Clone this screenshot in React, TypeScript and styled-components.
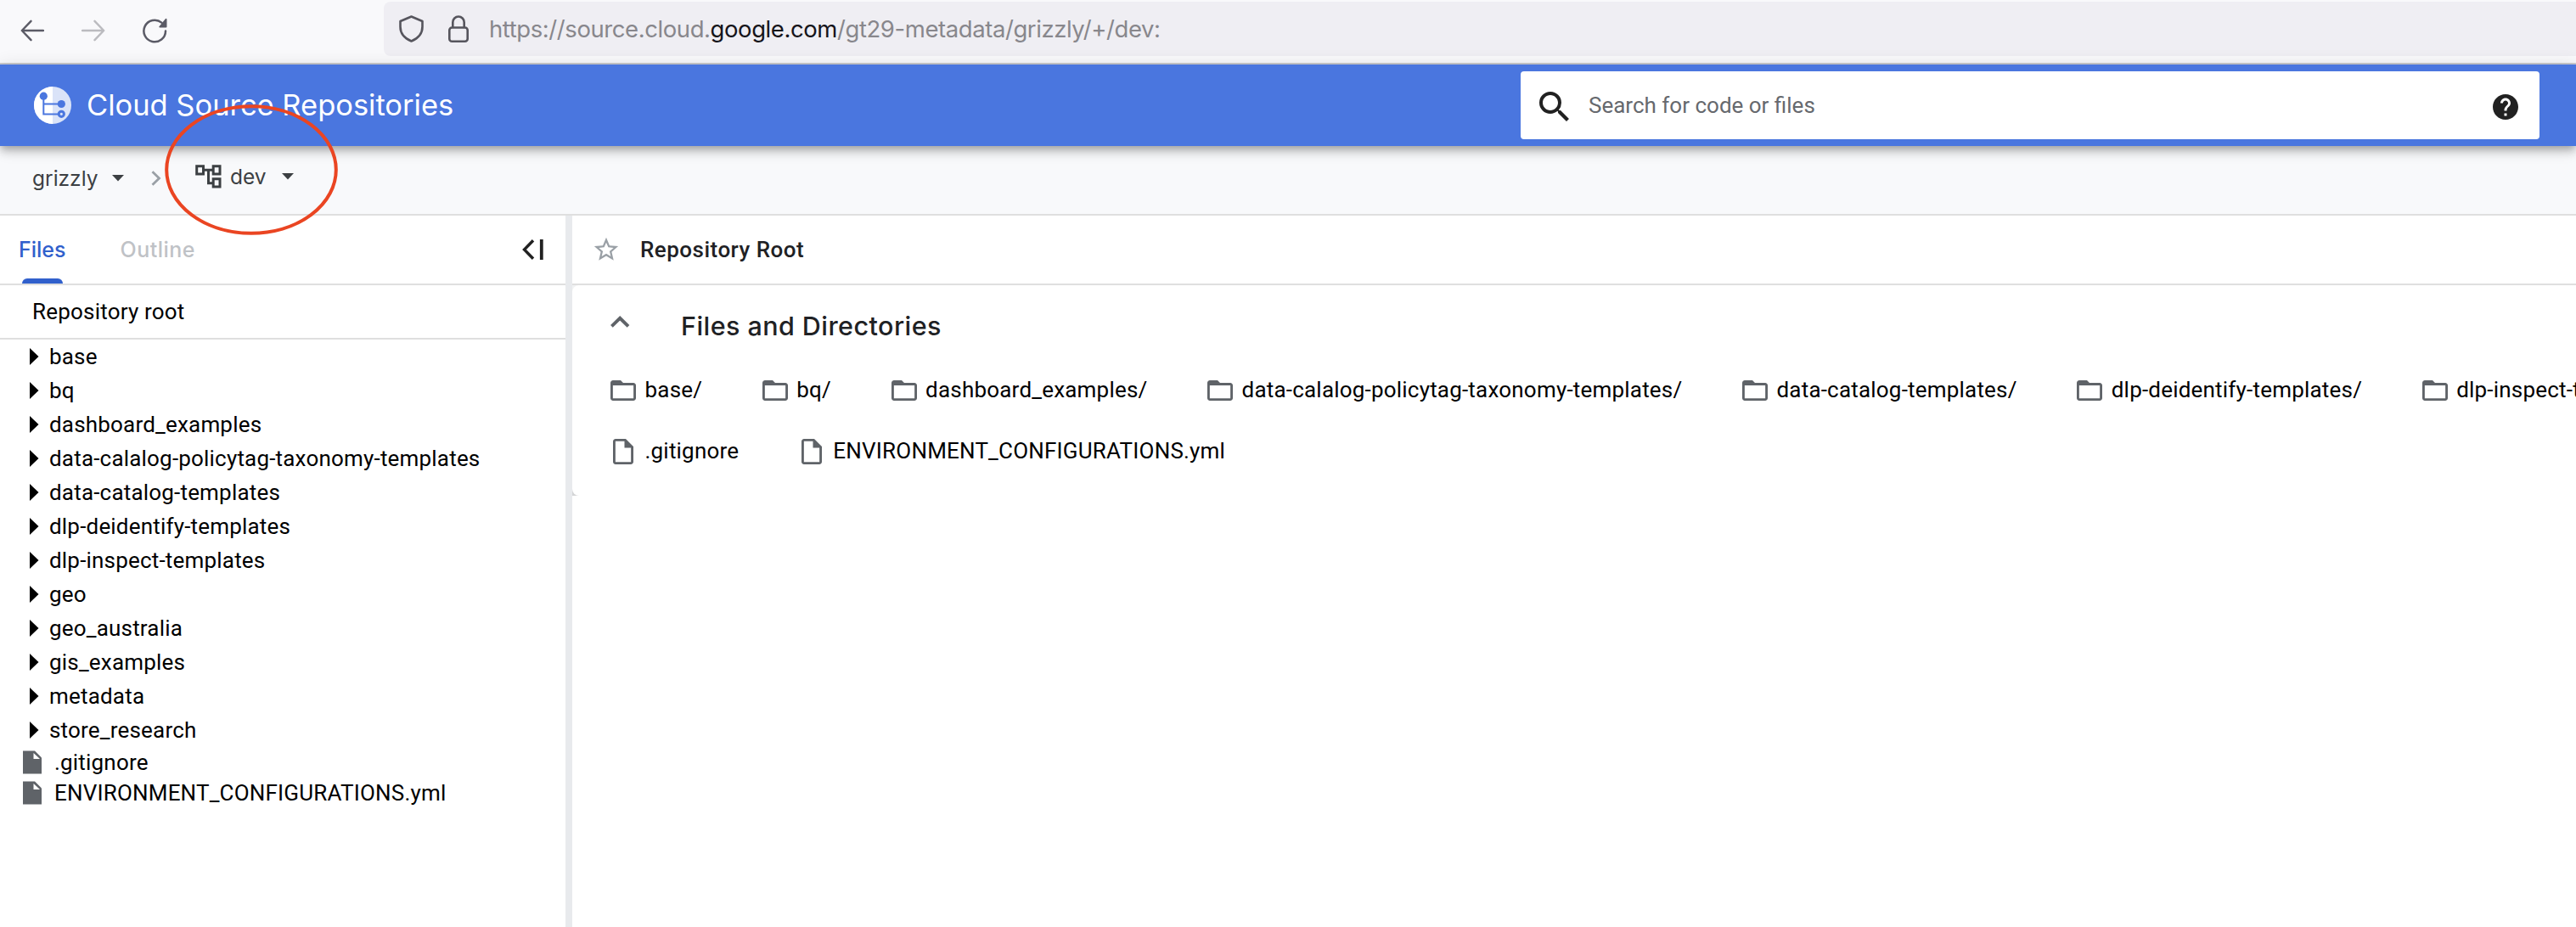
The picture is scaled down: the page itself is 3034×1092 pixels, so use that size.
import React from "react";
import styled, { createGlobalStyle } from "styled-components";

const GlobalStyle = createGlobalStyle`
  *, *::before, *::after { box-sizing: border-box; }
  body { margin: 0; background: #fff; overflow: hidden; }
  svg { display: block; flex: none; }
`;

const roboto = `Roboto, "Liberation Sans", sans-serif`;
const display = `Inter, "Liberation Sans", sans-serif`;

const Page = styled.div`
  position: relative;
  display: flex;
  flex-direction: column;
  height: 1092px;
  overflow: hidden;
  font-family: ${roboto};
  font-size: 26px;
  color: #000;
`;

const BrowserBar = styled.div`
  display: flex;
  flex: none;
  height: 76px;
  padding-top: 2px;
  background: #f9f9fb;
  border-bottom: 2px solid #cbcbce;
`;

const NavButtons = styled.div`
  display: flex;
  align-items: center;
  gap: 44px;
  width: 452px;
  height: 68px;
  padding-left: 24px;
`;

const AddressBar = styled.div`
  display: flex;
  flex: 1;
  align-items: center;
  height: 64px;
  padding-left: 18px;
  border-radius: 8px 0 0 8px;
  background: #efeef3;
`;

const LockSlot = styled.span`
  margin-left: 29px;
`;

const Url = styled.span`
  margin-left: 24px;
  font: 400 27.5px/66px ${display};
  letter-spacing: -0.42px;
  color: #88878c;
  white-space: nowrap;
`;

const Host = styled.span`
  color: #15141a;
`;

const Header = styled.header`
  position: relative;
  z-index: 1;
  display: flex;
  flex: none;
  align-items: center;
  justify-content: space-between;
  height: 96px;
  padding: 0 43px 0 40px;
  background: #4a76df;
  box-shadow: 0 8px 10px rgba(0, 0, 0, 0.14), 0 2px 20px rgba(0, 0, 0, 0.12),
    0 4px 8px -2px rgba(0, 0, 0, 0.2);
`;

const Brand = styled.div`
  display: flex;
  align-items: center;
  gap: 18px;
`;

const BrandName = styled.span`
  font: 400 34.5px/48px ${display};
  letter-spacing: -0.02px;
  color: #fff;
  white-space: nowrap;
`;

const SearchBox = styled.div`
  display: flex;
  align-items: center;
  width: 1200px;
  height: 80px;
  padding: 4px 22px 0 16px;
  border-radius: 4px;
  background: #fff;
`;

const SearchHint = styled.span`
  flex: 1;
  margin: -5px 0 0 16px;
  font-size: 26px;
  line-height: 40px;
  color: #66696e;
`;

const Crumbs = styled.nav`
  display: flex;
  flex: none;
  height: 82px;
  padding: 16px 0 0 38px;
  background: #f8f9fb;
  border-bottom: 2px solid #dfdfdf;
`;

const Crumb = styled.span<{ $width: number; $lift?: number }>`
  display: flex;
  align-items: center;
  justify-content: space-between;
  width: ${(p) => p.$width}px;
  height: 44px;
  margin-top: ${(p) => -(p.$lift ?? 0)}px;
  font: 400 24.5px/44px ${display};
  color: #3c4043;
`;

const CrumbSeparator = styled.span`
  display: flex;
  align-items: center;
  height: 44px;
  margin: 0 40px 0 32px;
`;

const CrumbLabel = styled.span`
  display: flex;
  align-items: center;
  gap: 10px;
`;

const Body = styled.div`
  display: flex;
  flex: 1;
`;

const Sidebar = styled.aside`
  width: 674px;
  flex: none;
  border-right: 8px solid #e8eaed;
`;

const TabRow = styled.div`
  display: flex;
  justify-content: space-between;
  height: 82px;
  padding: 0 26px 0 22px;
  border-bottom: 2px solid #dfdfdf;
`;

const Tabs = styled.div`
  display: flex;
  gap: 64px;
`;

const Tab = styled.div<{ $active?: boolean }>`
  display: flex;
  flex-direction: column;
  align-items: center;
  justify-content: space-between;
  height: 80px;
  font: 500 25px/80px ${display};
  letter-spacing: ${(p) => (p.$active ? 0 : 0.5)}px;
  color: ${(p) => (p.$active ? "#3160cc" : "#bfc2c6")};
  &::after {
    content: "";
    display: ${(p) => (p.$active ? "block" : "none")};
    width: 54px;
    height: 6px;
    margin-top: -6px;
    border-radius: 6px 6px 0 0;
    background: #3160cc;
    width: 48px;
  }
`;

const CollapseButton = styled.span`
  display: flex;
  align-items: center;
  height: 80px;
`;

const SidebarHeading = styled.div`
  height: 64px;
  padding-left: 38px;
  border-bottom: 2px solid #dfdfdf;
  font-size: 26px;
  line-height: 62px;
  letter-spacing: 0.2px;
`;

const TreeFolder = styled.div`
  display: flex;
  align-items: center;
  gap: 12px;
  height: 40px;
  padding-left: 35px;
  line-height: 40px;
  letter-spacing: 0.19px;
  white-space: nowrap;
`;

const TreeFile = styled(TreeFolder)`
  gap: 14px;
  height: 36px;
  padding-left: 27px;
  line-height: 36px;
`;

const Main = styled.main`
  flex: 1;
  min-width: 0;
`;

const TitleRow = styled.div`
  display: flex;
  align-items: center;
  gap: 23px;
  height: 82px;
  padding-left: 23px;
  border-bottom: 2px solid #dfdfdf;
`;

const Title = styled.h1`
  margin: 0;
  font: 500 26px/80px ${roboto};
  letter-spacing: 0.48px;
  color: #202124;
`;

const CardBackdrop = styled.div`
  background: linear-gradient(#f1f2f3 50%, #d4d5d7 50%);
`;

const Card = styled.section`
  height: 248px;
  padding-left: 42px;
  border-radius: 8px 0 0 8px;
  background: #fff;
`;

const CardHeader = styled.div`
  display: flex;
  align-items: center;
  height: 88px;
  padding: 0 0 2px 3px;
`;

const CardTitle = styled.h2`
  margin: 9px 0 0 60px;
  font: 500 30.5px/80px ${display};
  letter-spacing: 0.44px;
  color: #202124;
`;

const EntryRow = styled.div`
  display: flex;
  gap: 67.6px;
  height: 72px;
`;

const Entry = styled.span`
  display: flex;
  flex: none;
  align-items: center;
  gap: 7.5px;
  height: 72px;
  letter-spacing: 0.2px;
  white-space: nowrap;
`;

const EntryName = styled.span`
  padding-bottom: 2px;
`;

const Annotation = styled.svg`
  position: absolute;
  z-index: 2;
  left: 194px;
  top: 123px;
`;

const line = { fill: "none", strokeLinecap: "round", strokeLinejoin: "round" } as const;

const BackIcon = () => (
  <svg width="28" height="26" viewBox="0 0 28 26" stroke="#5b5b66" strokeWidth="2.4" {...line}>
    <path d="M27 13H2M12.500 1.800 1.800 13l10.700 11.200" />
  </svg>
);

const ForwardIcon = () => (
  <svg width="28" height="26" viewBox="0 0 28 26" stroke="#bbbbbf" strokeWidth="2.4" {...line}>
    <path d="M1 13h25M15.500 1.800 26.200 13 15.500 24.200" />
  </svg>
);

const ReloadIcon = () => (
  <svg width="29" height="30" viewBox="0 0 29 30">
    <path d="M27 15.500A12.800 12.800 0 1 1 22.300 5.600" stroke="#5b5b66" strokeWidth="2.5" {...line} />
    <path d="M28.500 1.800v8.700a1 1 0 0 1-1 1h-7.300a.8.800 0 0 1-.6-1.400l7.400-9a.9.900 0 0 1 1.500.7z" fill="#5b5b66" />
  </svg>
);

const ShieldIcon = () => (
  <svg width="29" height="32" viewBox="0 0 29 32" stroke="#56555d" strokeWidth="2.6" {...line}>
    <path d="M14.500 1.500 27.500 7v6.500c0 7-4.500 13.500-13 17-8.500-3.500-13-10-13-17V7z" />
  </svg>
);

const LockIcon = () => (
  <svg width="24" height="32" viewBox="0 0 24 32" stroke="#56555d" strokeWidth="2.6" {...line}>
    <rect x="1.300" y="14.500" width="21.400" height="16.200" rx="3" />
    <path d="M5.300 14V8.200a6.700 6.700 0 0 1 13.400 0V14" />
  </svg>
);

const Logo = () => (
  <svg width="44" height="44" viewBox="0 0 44 44">
    <circle cx="22" cy="22" r="22" fill="#dae3f8" />
    <path d="M22 0a22 22 0 0 0 0 44z" fill="#fff" />
    <g fill="none" stroke="#4a76df" strokeWidth="2">
      <path d="M11.300 11v21.500h18M11.300 20.500h21" />
      <circle cx="32.300" cy="32.300" r="3.100" strokeWidth="3" />
    </g>
    <circle cx="11.300" cy="11.200" r="4.600" fill="#4a76df" />
    <circle cx="32.300" cy="20.500" r="4.600" fill="#4a76df" />
  </svg>
);

const SearchIcon = () => (
  <svg width="48" height="48" viewBox="0 0 24 24" fill="#212121">
    <path d="M15.500 14h-.79l-.28-.27A6.471 6.471 0 0 0 16 9.500 6.500 6.500 0 1 0 9.500 16c1.610 0 3.090-.59 4.230-1.570l.27.28v.79l5 4.990L20.490 19l-4.990-5zm-6 0C7.010 14 5 11.990 5 9.500S7.010 5 9.500 5 14 7.010 14 9.500 11.990 14 9.500 14z" />
  </svg>
);

const HelpIcon = () => (
  <svg width="36" height="36" viewBox="0 0 24 24" fill="#212121">
    <path d="M12 2C6.480 2 2 6.480 2 12s4.480 10 10 10 10-4.480 10-10S17.520 2 12 2zm1 17h-2v-2h2v2zm2.070-7.750l-.9.920C13.450 12.900 13 13.500 13 15h-2v-.5c0-1.100.45-2.100 1.170-2.830l1.240-1.260c.37-.36.590-.86.590-1.410 0-1.100-.9-2-2-2s-2 .9-2 2H8c0-2.210 1.790-4 4-4s4 1.790 4 4c0 .88-.36 1.680-.93 2.250z" />
  </svg>
);

const CaretIcon = () => (
  <svg width="14" height="8" viewBox="0 0 14 8" fill="#3c4043">
    <path d="M0 0h14L7 7.600z" />
  </svg>
);

const ChevronRightIcon = () => (
  <svg width="12" height="18" viewBox="0 0 12 18" fill="none" stroke="#9aa0a6" strokeWidth="2.800">
    <path d="M1.500 1.200 9.500 9l-8 7.800" />
  </svg>
);

const TreeIcon = () => (
  <svg width="31" height="28" viewBox="0 0 31 28" fill="none" stroke="#3c4043" strokeWidth="3">
    <path d="M1.700 1.700H9.500V11H1.700zM21.200 1.700h7.800V11H21.200zM21.200 16.700h7.800v9.300H21.200zM9.500 6.300h11.700M15.500 6.300v15.400H21" />
  </svg>
);

const CollapseIcon = () => (
  <svg width="25" height="24" viewBox="0 0 25 24" fill="none" stroke="#212121">
    <path d="M13 1.200 2.500 12 13 22.800" strokeWidth="3.400" />
    <path d="M22.800 0v24" strokeWidth="3.800" />
  </svg>
);

const TriangleIcon = () => (
  <svg width="11" height="20" viewBox="0 0 11 20">
    <path d="M0 0 10.500 10 0 20z" />
  </svg>
);

const SolidFileIcon = () => (
  <svg width="23" height="28" viewBox="0 0 23 28">
    <path d="M0 .5h14l8 8V27.500H0z" fill="#5f6368" />
    <path d="M12.500 3v7H20z" fill="#fff" />
  </svg>
);

const StarIcon = () => (
  <svg width="34" height="34" viewBox="0 0 24 24" fill="#9aa0a6">
    <path d="M22 9.240l-7.190-.62L12 2 9.190 8.630 2 9.240l5.460 4.730L5.820 21 12 17.270 18.180 21l-1.630-7.030L22 9.240zM12 15.400l-3.760 2.270 1-4.280-3.320-2.880 4.380-.38L12 6.100l1.710 4.040 4.380.38-3.320 2.880 1 4.280L12 15.400z" />
  </svg>
);

const ChevronUpIcon = () => (
  <svg width="23" height="14" viewBox="0 0 23 14" fill="none" stroke="#5f6368" strokeWidth="3.900">
    <path d="M1.400 12.300 11.200 2.800l9.800 9.500" />
  </svg>
);

const FolderIcon = () => (
  <svg width="36" height="36" viewBox="0 0 24 24" fill="#5f6368">
    <path d="M20 6h-8l-2-2H4c-1.100 0-1.990.9-1.990 2L2 18c0 1.100.9 2 2 2h16c1.100 0 2-.9 2-2V8c0-1.100-.9-2-2-2zm.1 12.100H3.900V8h16.200z" />
  </svg>
);

const FileIcon = () => (
  <svg width="36" height="36" viewBox="0 0 24 24" fill="#5f6368">
    <path d="M14 2H6c-1.100 0-1.990.9-1.990 2L4 20c0 1.100.89 2 1.990 2H18c1.100 0 2-.9 2-2V8l-6-6zM5.900 20.100V3.900H13V9h5.100v11.100z" />
  </svg>
);

const folders = [
  "base",
  "bq",
  "dashboard_examples",
  "data-calalog-policytag-taxonomy-templates",
  "data-catalog-templates",
  "dlp-deidentify-templates",
  "dlp-inspect-templates",
  "geo",
  "geo_australia",
  "gis_examples",
  "metadata",
  "store_research",
];
const files = [".gitignore", "ENVIRONMENT_CONFIGURATIONS.yml"];

export default function App() {
  return (
    <Page>
      <GlobalStyle />
      <BrowserBar>
        <NavButtons>
          <BackIcon />
          <ForwardIcon />
          <ReloadIcon />
        </NavButtons>
        <AddressBar>
          <ShieldIcon />
          <LockSlot>
            <LockIcon />
          </LockSlot>
          <Url>
            https://source.cloud.<Host>google.com</Host>/gt29-metadata/grizzly/+/dev:
          </Url>
        </AddressBar>
      </BrowserBar>
      <Header>
        <Brand>
          <Logo />
          <BrandName>Cloud Source Repositories</BrandName>
        </Brand>
        <SearchBox>
          <SearchIcon />
          <SearchHint>Search for code or files</SearchHint>
          <HelpIcon />
        </SearchBox>
      </Header>
      <Crumbs>
        <Crumb $width={108}>
          grizzly
          <CaretIcon />
        </Crumb>
        <CrumbSeparator>
          <ChevronRightIcon />
        </CrumbSeparator>
        <Crumb $width={116} $lift={2}>
          <CrumbLabel>
            <TreeIcon />
            dev
          </CrumbLabel>
          <CaretIcon />
        </Crumb>
      </Crumbs>
      <Body>
        <Sidebar>
          <TabRow>
            <Tabs>
              <Tab $active>Files</Tab>
              <Tab>Outline</Tab>
            </Tabs>
            <CollapseButton>
              <CollapseIcon />
            </CollapseButton>
          </TabRow>
          <SidebarHeading>Repository root</SidebarHeading>
          {folders.map((name) => (
            <TreeFolder key={name}>
              <TriangleIcon />
              {name}
            </TreeFolder>
          ))}
          {files.map((name) => (
            <TreeFile key={name}>
              <SolidFileIcon />
              {name}
            </TreeFile>
          ))}
        </Sidebar>
        <Main>
          <TitleRow>
            <StarIcon />
            <Title>Repository Root</Title>
          </TitleRow>
          <CardBackdrop>
            <Card>
              <CardHeader>
                <ChevronUpIcon />
                <CardTitle>Files and Directories</CardTitle>
              </CardHeader>
              <EntryRow>
                {folders.slice(0, 7).map((name) => (
                  <Entry key={name}>
                    <FolderIcon />
                    <EntryName>{name}/</EntryName>
                  </Entry>
                ))}
              </EntryRow>
              <EntryRow>
                {files.map((name) => (
                  <Entry key={name}>
                    <FileIcon />
                    <EntryName>{name}</EntryName>
                  </Entry>
                ))}
              </EntryRow>
            </Card>
          </CardBackdrop>
        </Main>
      </Body>
      <Annotation width="204" height="154" viewBox="0 0 204 154" fill="none">
        <ellipse cx="102" cy="77" rx="99.800" ry="74.800" stroke="#ea4522" strokeWidth="4" />
      </Annotation>
    </Page>
  );
}
